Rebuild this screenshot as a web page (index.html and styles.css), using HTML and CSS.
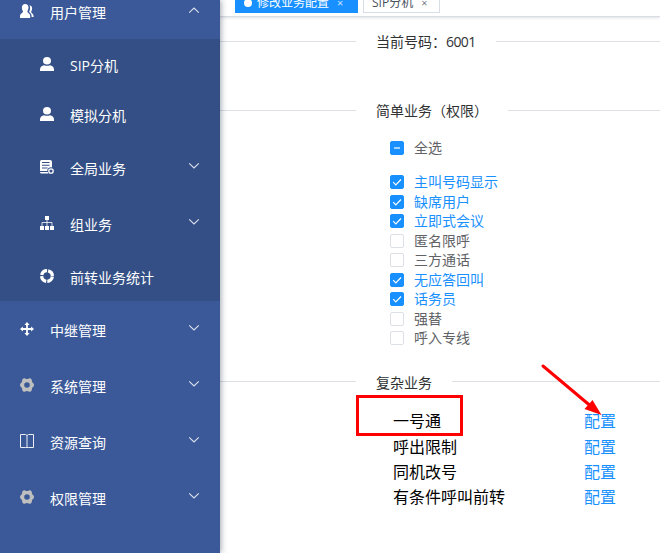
FILE: index.html
```html
<!DOCTYPE html>
<html lang="zh-CN">
<head>
<meta charset="utf-8">
<title>修改业务配置</title>
<link rel="stylesheet" href="styles.css">
</head>
<body>
<svg class="defs" width="0" height="0">
  <symbol id="down" viewBox="0 0 12 8"><path d="M1.2 1.4L6 6l4.8-4.6" fill="none" stroke="currentColor" stroke-width="1.1"/></symbol>
  <symbol id="user" viewBox="0 0 14 14"><ellipse cx="7" cy="3.8" rx="4" ry="3.8"/><path d="M0 14v-1.600C0 10.200 2 8.600 4 8.300Q7 9.400 10 8.300C12 8.600 14 10.200 14 12.400V14z"/></symbol>
  <symbol id="gear" viewBox="0 0 14 14"><path fill-rule="evenodd" d="M3.300.6Q4.200-.1 5.200.5Q7 1.600 8.800.5Q9.800-.1 10.700.6L11.500 1.200Q11.900 1.800 11.800 2.800Q11.900 4.600 13.300 5.300Q14 6 14 7T13.300 8.700Q11.900 9.400 11.800 11.200Q11.900 12.200 11.500 12.800L10.700 13.400Q9.800 14.100 8.800 13.500Q7 12.400 5.200 13.500Q4.200 14.100 3.300 13.400L2.500 12.800Q2.100 12.200 2.200 11.200Q2.100 9.400.7 8.700Q0 8 0 7T.7 5.300Q2.100 4.600 2.200 2.800Q2.100 1.800 2.500 1.200zM7 4.200a2.800 2.800 0 1 0 0 5.600a2.800 2.800 0 1 0 0-5.600z"/></symbol>
</svg>
<div class="app">
  <nav class="sidebar">
    <div class="item first">
      <svg class="icon" viewBox="0 0 14 14"><path d="M5.200 0C7.300 0 8.600 1.600 8.500 3.600C8.400 5.400 7.700 6.700 7.300 7.700C8 9.200 10.200 9.600 10.200 12V14H0V12C0 9.600 2.300 9.200 3.100 7.700C2.500 6.700 1.900 5.300 1.900 3.600C1.900 1.500 3.100 0 5.200 0z"/><path d="M9.500 1.200C11.600 1.500 12.200 3 12.100 4.500C12 6 11.400 7 11.100 8C11.700 9.400 13.600 10 13.600 12V13H11.700C11.700 10.400 10.900 9.200 9.100 7.900C10.200 5.600 10.600 3.300 9.500 1.200z"/></svg>
      <span class="name">用户管理</span><svg class="chev up"><use href="#down"/></svg>
    </div>
    <div class="submenu">
      <div class="item leaf"><svg class="icon"><use href="#user"/></svg><span class="name">SIP分机</span></div>
      <div class="item leaf"><svg class="icon"><use href="#user"/></svg><span class="name">模拟分机</span></div>
      <div class="item">
        <svg class="icon" viewBox="0 0 14 14"><path fill-rule="evenodd" d="M1.500 0H10Q12 0 12 1.800V7.600L10.500 7.300Q7.200 8 7.300 11H0V1.500Q0 0 1.500 0zM2 2V3.100H9.500V2zM2 4.700V5.800H9.500V4.700zM2 7.400V8.400H7.500V7.400z"/><path d="M0 12h7.700l.7 1.500H1.200Q0 13.500 0 12z"/><circle cx="11" cy="11" r="2.200" fill="none" stroke="currentColor" stroke-width="1.300"/></svg>
        <span class="name">全局业务</span><svg class="chev"><use href="#down"/></svg>
      </div>
      <div class="item">
        <svg class="icon" viewBox="0 0 14 14"><path d="M5 0h4v4H5zM0 10h4v4H0zM5 10h4v4H5zM10 10h4v4h-4z"/><path d="M7 4v6M2 10V6.500h10V10" fill="none" stroke="currentColor" stroke-width=".8"/></svg>
        <span class="name">组业务</span><svg class="chev"><use href="#down"/></svg>
      </div>
      <div class="item leaf">
        <svg class="icon" viewBox="0 0 14 14"><circle cx="7" cy="7" r="5.350" fill="none" stroke="currentColor" stroke-width="3.300" stroke-dasharray="7.304 1.100" stroke-dashoffset="-.55"/></svg>
        <span class="name">前转业务统计</span>
      </div>
    </div>
    <div class="item">
      <svg class="icon" viewBox="0 0 14 14"><path d="M7 0l2.600 2.900H7.900v3.200h3.200V4.400L14 7l-2.900 2.600V7.900H7.900v3.200h1.700L7 14l-2.600-2.900h1.700V7.900H2.900v1.700L0 7l2.900-2.600v1.700h3.200V2.900H4.400z"/></svg>
      <span class="name">中继管理</span><svg class="chev"><use href="#down"/></svg>
    </div>
    <div class="item"><svg class="icon gray"><use href="#gear"/></svg><span class="name">系统管理</span><svg class="chev"><use href="#down"/></svg></div>
    <div class="item">
      <svg class="icon" viewBox="0 0 14 14"><path d="M6.500 1.500V13M7.500 1.500V13" stroke="currentColor" opacity=".45"/><path d="M5.500.5h-5v13h5M8.500.5h5v13h-5M5.500.5L7 1.500L8.500.5M5.500 13.500h3" fill="none" stroke="currentColor" stroke-width=".9"/></svg>
      <span class="name">资源查询</span><svg class="chev"><use href="#down"/></svg>
    </div>
    <div class="item"><svg class="icon gray"><use href="#gear"/></svg><span class="name">权限管理</span><svg class="chev"><use href="#down"/></svg></div>
  </nav>
  <main class="main">
    <div class="tabs">
      <div class="tab active"><i class="dot"></i><span>修改业务配置</span><b class="close">×</b></div>
      <div class="tab"><span>SIP分机</span><b class="close">×</b></div>
    </div>
    <div class="divider current"><span>当前号码：<span class="num">6001</span></span></div>
    <div class="divider simple"><span>简单业务（权限）</span></div>
    <div class="check all on"><i class="box"><svg viewBox="0 0 14 14"><path d="M4 7h6"/></svg></i><span>全选</span></div>
    <div class="checks">
      <div class="check on"><i class="box"><svg viewBox="0 0 14 14"><path d="M3.200 7.200l2.600 2.600L11 4.500"/></svg></i><span>主叫号码显示</span></div>
      <div class="check on"><i class="box"><svg viewBox="0 0 14 14"><path d="M3.200 7.200l2.600 2.600L11 4.500"/></svg></i><span>缺席用户</span></div>
      <div class="check on"><i class="box"><svg viewBox="0 0 14 14"><path d="M3.200 7.200l2.600 2.600L11 4.500"/></svg></i><span>立即式会议</span></div>
      <div class="check"><i class="box"></i><span>匿名限呼</span></div>
      <div class="check"><i class="box"></i><span>三方通话</span></div>
      <div class="check on"><i class="box"><svg viewBox="0 0 14 14"><path d="M3.200 7.200l2.600 2.600L11 4.500"/></svg></i><span>无应答回叫</span></div>
      <div class="check on"><i class="box"><svg viewBox="0 0 14 14"><path d="M3.200 7.200l2.600 2.600L11 4.500"/></svg></i><span>话务员</span></div>
      <div class="check"><i class="box"></i><span>强替</span></div>
      <div class="check"><i class="box"></i><span>呼入专线</span></div>
    </div>
    <div class="divider complex"><span>复杂业务</span></div>
    <div class="services">
      <span>一号通</span><a>配置</a>
      <span>呼出限制</span><a>配置</a>
      <span>同机改号</span><a>配置</a>
      <span>有条件呼叫前转</span><a>配置</a>
    </div>
  </main>
  <div class="highlight"></div>
  <svg class="arrow" viewBox="0 0 62 52"><path d="M2 2L49 41.500" stroke="#f00" stroke-width="3" stroke-linecap="round"/><path d="M60.500 51L43.500 45L51.500 36z" fill="#f00"/></svg>
</div>
</body>
</html>
```

FILE: styles.css
```css
* { box-sizing: border-box; }
body {
  margin: 0;
  background: #fff;
  font-family: "Open Sans", "Noto Sans CJK SC", sans-serif;
  font-size: 14px;
  line-height: 20px;
}
.defs { position: absolute; }
.app {
  position: relative;
  display: flex;
  width: 660px;
  height: 553px;
  overflow: hidden;
}
.sidebar {
  flex: 0 0 220px;
  z-index: 1;
  background: #3b5998;
  color: #fff;
  box-shadow: 1px 0 6px rgba(0, 21, 41, .38);
}
.item {
  display: flex;
  align-items: center;
  height: 56px;
  padding: 0 20px;
}
.first { margin-top: -17px; }
.submenu { background: #334f85; }
.submenu .item { padding-left: 40px; }
.submenu .leaf { height: 50px; }
.icon {
  width: 14px;
  height: 14px;
  margin-right: 16px;
  fill: currentColor;
}
.gray { color: #bfbfbf; }
.name { flex: 1; padding-top: 3px; white-space: nowrap; }
.chev { width: 12px; height: 8px; margin: 0 0 2px; color: #dce2ee; }
.up { transform: scaleY(-1); }
.main { flex: 1; min-width: 0; }
.tabs {
  display: flex;
  gap: 5px;
  height: 17px;
  padding-left: 15px;
  border-bottom: 1px solid #d8dce5;
  box-shadow: 0 1px 3px rgba(0, 0, 0, .12);
}
.tab {
  display: flex;
  align-items: center;
  width: 77px;
  height: 26px;
  margin-top: -13px;
  padding: 5px 0 0 8px;
  border: 1px solid #d8dce5;
  color: #495060;
  font-size: 12px;
  white-space: nowrap;
}
.active {
  width: 123px;
  background: #1890ff;
  border-color: #1890ff;
  color: #fff;
}
.dot {
  width: 8px;
  height: 8px;
  margin-right: 5px;
  border-radius: 50%;
  background: #fff;
}
.close { margin: 1px 0 0 8px; font-size: 11px; font-weight: 400; opacity: .75; }
.divider {
  display: flex;
  align-items: center;
  height: 20px;
  color: #303133;
}
.divider::before, .divider::after {
  content: "";
  height: 1px;
  background: #dcdfe6;
}
.divider::before { width: 136px; }
.divider::after { flex: 1; }
.divider > span { padding: 2px 20px 0; white-space: nowrap; }
.num { font-weight: 500; letter-spacing: -.6px; }
.current { margin-top: 14px; }
.simple { margin-top: 49px; }
.check {
  display: flex;
  align-items: center;
  height: 19.5px;
  padding-left: 170px;
  color: #606266;
}
.all { margin-top: 18px; }
.box {
  width: 14px;
  height: 14px;
  margin-right: 10px;
  border: 1px solid #dcdfe6;
  border-radius: 2px;
}
.box svg {
  display: block;
  width: 14px;
  height: 14px;
  margin: -1px;
  fill: none;
  stroke: #fff;
  stroke-width: 1.2;
}
.on { color: #1890ff; }
.on .box { background: #1890ff; border-color: #1890ff; }
.all span { color: #606266; }
.checks { margin-top: 15px; }
.complex { margin-top: 23.5px; }
.services {
  display: grid;
  grid-template-columns: 191px 1fr;
  grid-auto-rows: 25.4px;
  align-items: center;
  margin-top: 17px;
  padding-left: 173px;
  font-size: 16px;
  color: #000;
}
.services a { color: #1890ff; }
.highlight {
  position: absolute;
  left: 356px;
  top: 395px;
  width: 107px;
  height: 41px;
  border: 3px solid #f00;
}
.arrow {
  position: absolute;
  left: 541px;
  top: 364px;
  width: 62px;
  height: 52px;
}
```
